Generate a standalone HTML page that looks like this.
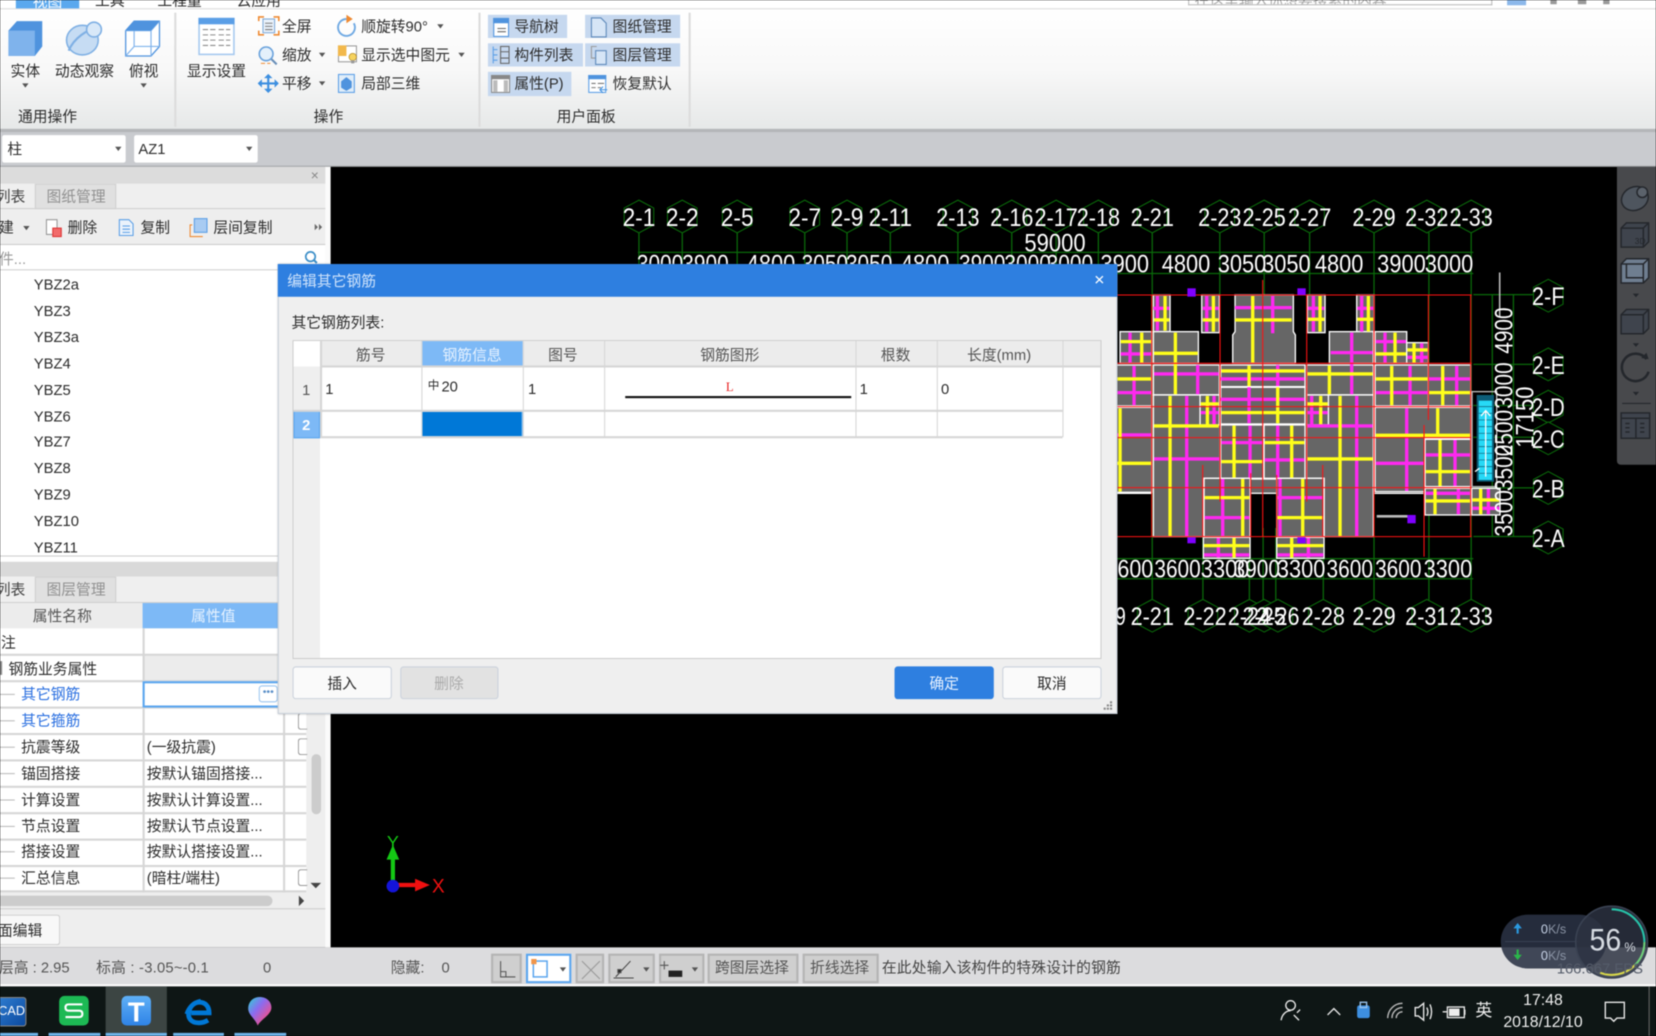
<!DOCTYPE html>
<html lang="zh"><head><meta charset="utf-8"><title>编辑其它钢筋</title>
<style>
html,body{margin:0;padding:0;width:1656px;height:1036px;overflow:hidden;background:#000}
#root{position:absolute;left:0;top:0;width:1568px;height:981px;overflow:hidden;transform-origin:0 0;transform:scale(1.05612);filter:blur(.45px);font-family:"Liberation Sans","Noto Sans CJK SC",sans-serif;font-size:14px;color:#2c2c2c}
.b{position:absolute;box-sizing:border-box}
.t{position:absolute;white-space:nowrap;line-height:1;transform:translateY(-50%)}
.c{position:absolute;white-space:nowrap;line-height:1;transform:translate(-50%,-50%)}
svg{position:absolute;overflow:visible}
.hl{position:absolute;background:#c6d8ef}
.ar{position:absolute;width:0;height:0;border-left:3px solid transparent;border-right:3px solid transparent;border-top:4px solid #555}
.ln{position:absolute;height:1.5px;background:#d6d6d6}
.g{color:#555}
.tb{position:absolute;box-sizing:border-box;top:903px;height:28px;background:#cfcfcf;border:2px solid #b4b4b4}
</style></head><body>
<div id="root">
<!-- ribbon -->
<div class="b" style="left:0;top:0;width:1568px;height:8px;background:#fff"></div>
<div class="b" style="left:15px;top:0;width:60px;height:8px;background:#5aa8ee;overflow:hidden"><span class="c" style="left:30px;top:1px;color:#fff">视图</span></div>
<div class="b" style="left:0;top:0;width:500px;height:8px;overflow:hidden"><span class="c" style="left:104px;top:0">工具</span><span class="c" style="left:170px;top:0">工程量</span><span class="c" style="left:245px;top:0">云应用</span></div>
<div class="b" style="left:1125px;top:0;width:288px;height:5px;background:#fff;border:1px solid #bbb;border-top:0;overflow:hidden"><span class="t" style="left:5px;top:0;color:#aaa">在这里输入你想要搜索的内容</span></div>
<div class="b" style="left:1427px;top:0;width:18px;height:5px;background:#8cb8ea"></div>
<div class="b" style="left:1468px;top:0;width:6px;height:4px;background:#999"></div><div class="b" style="left:1494px;top:0;width:8px;height:4px;background:#999"></div><div class="b" style="left:1518px;top:0;width:6px;height:4px;background:#999"></div>
<div class="b" style="left:0;top:8px;width:1568px;height:115px;background:linear-gradient(#fff 0,#f8f8f8 50%,#e6e8e8 100%);border-top:1px solid #e4e4e4"></div>
<div class="b" style="left:0;top:122px;width:1568px;height:3px;background:#b4b6b9"></div>
<div class="b" style="left:165px;top:12px;width:1.5px;height:108px;background:#dcdcdc"></div>
<div class="b" style="left:453px;top:12px;width:1.5px;height:108px;background:#dcdcdc"></div>
<div class="b" style="left:652px;top:12px;width:1.5px;height:108px;background:#dcdcdc"></div>
<span class="hl" style="left:462px;top:14px;width:75px;height:22px"></span>
<span class="hl" style="left:554px;top:14px;width:90px;height:22px"></span>
<span class="hl" style="left:462px;top:41px;width:90px;height:22px"></span>
<span class="hl" style="left:554px;top:41px;width:90px;height:22px"></span>
<span class="hl" style="left:462px;top:68px;width:79px;height:23px"></span>
<svg width="1568" height="130" style="left:0;top:0" fill="none">
<path d="M8 29 16 20H40V44L33 53H8Z" fill="#4f93de"/><rect x="8" y="29" width="25" height="24" fill="#7fb3ec"/>
<ellipse cx="78" cy="38" rx="15" ry="14" fill="#c6dcf3" stroke="#7fb0e4" stroke-width="1.5"/><path d="M65 48C70 36 82 28 95 25" stroke="#7fb0e4" stroke-width="2"/><circle cx="89" cy="28" r="7" fill="#d8e8f8" stroke="#7fb0e4" stroke-width="1.5"/>
<path d="M119 29 127 20H151V44L143 53H119Z" stroke="#4f93de" stroke-width="1.2" fill="#fff"/><path d="M119 29H143V53M143 29 151 20M127 20V44H151M119 53 127 44" stroke="#7fb3ec" stroke-width="1.1"/><path d="M119 29 127 20H151L143 29Z" fill="#4f93de"/>
<rect x="188.500" y="17.500" width="33" height="34" fill="#fff" stroke="#a6c9ef" stroke-width="1.500"/><rect x="188" y="17" width="34" height="6" fill="#5a9ee6"/>
<path d="M192 28h5M199 28h5M207 28h5M214 28h4M192 33h5M199 33h5M207 33h5M214 33h4M192 38h5M199 38h5M207 38h5M214 38h4M192 43h5M199 43h5M207 43h5M214 43h4" stroke="#8a8a8a"/>
<path d="M245 20v-4h5M259 16h5v4M264 29v4h-5M250 33h-5v-4" stroke="#ee8a33" stroke-width="1.500"/><rect x="249" y="18" width="11" height="13" fill="#eaf2fb" stroke="#7fa9d8"/><path d="M251 22h7M251 25h7M251 28h7" stroke="#7a7a7a"/>
<circle cx="252" cy="51" r="6.500" fill="#e4f0fb" stroke="#6aa2dc" stroke-width="1.500"/><path d="M257 56 262 61" stroke="#6a8fb8" stroke-width="2"/><path d="M247 60h4M253 60h3" stroke="#ee8a33"/>
<path d="M254 71V87M245 79H263" stroke="#3d8fe0" stroke-width="2"/><path d="M254 70 250 74H258ZM254 88 250 84H258ZM244 79 248 75V83ZM264 79 260 75V83Z" fill="#3d8fe0"/>
<path d="M328 18A8 8 0 1 0 335 22" stroke="#6fa9e3" stroke-width="1.800"/><path d="M328 14 334 18 328 22Z" fill="#ee8a33"/>
<rect x="320.500" y="43.500" width="17" height="15" fill="#fff" stroke="#9a9a9a"/><rect x="320" y="43" width="8" height="10" fill="#f2b84b"/><circle cx="334" cy="54" r="3.500" fill="#f6d35f" stroke="#b58b25" stroke-width=".7"/><rect x="332.500" y="57" width="3" height="3" fill="#999"/>
<rect x="320.500" y="70.500" width="15" height="17" fill="#e0edf9" stroke="#5a9ee6"/><path d="M328 73 333 77V83L328 86 323 83V77Z" fill="#4f93de"/>
<rect x="467.500" y="17.500" width="14" height="17" fill="#fff" stroke="#4f93de"/><rect x="467" y="17" width="15" height="5" fill="#4f93de"/><path d="M471 27h8M471 30h8" stroke="#666"/>
<path d="M560 17h9l5 5v13h-14Z" fill="#d6e5f6" stroke="#5b87b9"/>
<path d="M467 44v16M467 47h4M467 52h4M467 57h4" stroke="#5a9ee6"/><rect x="474" y="44" width="8" height="16" fill="none" stroke="#666"/><path d="M474 49h8M474 55h8" stroke="#666"/>
<path d="M565 44h-5v11h5" stroke="#999" fill="none"/><rect x="564" y="48" width="10" height="13" fill="#d6e5f6" stroke="#5b87b9"/>
<rect x="465.500" y="71.500" width="17" height="16" fill="#fff" stroke="#888"/><rect x="465" y="71" width="18" height="4" fill="#888"/><rect x="467" y="76" width="4" height="11" fill="#bbb"/><rect x="477" y="76" width="4" height="11" fill="#bbb"/>
<rect x="557.500" y="71.500" width="16" height="16" fill="#fff" stroke="#5a9ee6"/><rect x="557" y="71" width="17" height="4" fill="#4f93de"/><path d="M560 79h4M566 79h6M560 83h4M566 83h3" stroke="#777"/><path d="M569 85h6M571 82l-3 3 3 3" stroke="#3d8fe0"/>
</svg>
<span class="c" style="left:24px;top:67px">实体</span><span class="ar" style="left:21px;top:79px"></span>
<span class="c" style="left:80px;top:67px">动态观察</span>
<span class="c" style="left:136px;top:67px">俯视</span><span class="ar" style="left:133px;top:79px"></span>
<span class="c" style="left:205px;top:67px">显示设置</span>
<span class="c" style="left:45px;top:110px">通用操作</span><span class="c" style="left:311px;top:110px">操作</span><span class="c" style="left:555px;top:110px">用户面板</span>
<span class="t" style="left:267px;top:25px">全屏</span><span class="t" style="left:267px;top:52px">缩放</span><span class="ar" style="left:302px;top:50px"></span><span class="t" style="left:267px;top:79px">平移</span><span class="ar" style="left:302px;top:77px"></span>
<span class="t" style="left:342px;top:25px">顺旋转90°</span><span class="ar" style="left:414px;top:23px"></span><span class="t" style="left:342px;top:52px">显示选中图元</span><span class="ar" style="left:434px;top:50px"></span><span class="t" style="left:342px;top:79px">局部三维</span>
<span class="t" style="left:487px;top:25px">导航树</span><span class="t" style="left:580px;top:25px">图纸管理</span><span class="t" style="left:487px;top:52px">构件列表</span><span class="t" style="left:580px;top:52px">图层管理</span><span class="t" style="left:487px;top:79px">属性(P)</span><span class="t" style="left:580px;top:79px">恢复默认</span>
<!-- combos -->
<div class="b" style="left:0;top:125px;width:1568px;height:33px;background:#c9cbcf;border-bottom:1px solid #9fa1a4"></div>
<div class="b" style="left:2px;top:128px;width:117px;height:26px;background:#fff;border-radius:2px"></div><span class="t" style="left:7px;top:141px">柱</span><span class="ar" style="left:109px;top:139px"></span>
<div class="b" style="left:127px;top:128px;width:117px;height:26px;background:#fff;border-radius:2px"></div><span class="t" style="left:131px;top:141px">AZ1</span><span class="ar" style="left:233px;top:139px"></span>

<!-- CAD canvas -->
<svg width="1568" height="981" style="left:0;top:0" fill="none" font-family="Liberation Sans,sans-serif">
<rect x="313" y="158" width="1255" height="740" fill="#000"/>
<defs><polygon id="h" points="0,-15.500 14,-8 14,8 0,15.500 -14,8 -14,-8" stroke="#0a6a0a" stroke-width="1"/></defs>
<g stroke="#0a6a0a" stroke-width="1.200">
<path d="M605 220V265M646 220V265M698 220V265M762 220V265M802 220V265M843 220V265M907 220V265M958 220V265M1000 220V265M1040 220V265M1091 220V568M1155 220V305M1197 220V305M1240 220V305M1301 220V568M1353 220V568M1393 220V568"/>
<path d="M604 239H1395M604 259H1395"/>
<path d="M1058 529H1395M1058 548H1395M1139 500V568M1183 500V568M1196 500V568M1208 500V568M1253 500V568"/>
<path d="M1395 279H1452M1395 345H1452M1395 384H1452M1395 414H1452M1395 462H1452M1395 508H1452M1413 279V508M1433 279V508"/>
</g>
<path d="M1420 258V300" stroke="#bbb" stroke-width="1.500"/>
<g fill="#000">
<use href="#h" x="605" y="205"/><use href="#h" x="646" y="205"/><use href="#h" x="698" y="205"/><use href="#h" x="762" y="205"/><use href="#h" x="802" y="205"/><use href="#h" x="843" y="205"/><use href="#h" x="907" y="205"/><use href="#h" x="958" y="205"/><use href="#h" x="1000" y="205"/><use href="#h" x="1040" y="205"/><use href="#h" x="1091" y="205"/><use href="#h" x="1155" y="205"/><use href="#h" x="1197" y="205"/><use href="#h" x="1240" y="205"/><use href="#h" x="1301" y="205"/><use href="#h" x="1351" y="205"/><use href="#h" x="1393" y="205"/>
<use href="#h" x="1091" y="583"/><use href="#h" x="1139" y="583"/><use href="#h" x="1183" y="583"/><use href="#h" x="1197" y="583"/><use href="#h" x="1210" y="583"/><use href="#h" x="1253" y="583"/><use href="#h" x="1301" y="583"/><use href="#h" x="1351" y="583"/><use href="#h" x="1393" y="583"/>
<use href="#h" x="1466" y="280"/><use href="#h" x="1466" y="345"/><use href="#h" x="1466" y="385"/><use href="#h" x="1466" y="415"/><use href="#h" x="1466" y="462"/><use href="#h" x="1466" y="509"/>
</g>
<g fill="#fff" font-size="24" text-anchor="middle">
<text x="605" y="214" textLength="31" lengthAdjust="spacingAndGlyphs">2-1</text><text x="646" y="214" textLength="31" lengthAdjust="spacingAndGlyphs">2-2</text><text x="698" y="214" textLength="31" lengthAdjust="spacingAndGlyphs">2-5</text><text x="762" y="214" textLength="31" lengthAdjust="spacingAndGlyphs">2-7</text><text x="802" y="214" textLength="31" lengthAdjust="spacingAndGlyphs">2-9</text><text x="843" y="214" textLength="41" lengthAdjust="spacingAndGlyphs">2-11</text><text x="907" y="214" textLength="41" lengthAdjust="spacingAndGlyphs">2-13</text><text x="958" y="214" textLength="41" lengthAdjust="spacingAndGlyphs">2-16</text><text x="1000" y="214" textLength="41" lengthAdjust="spacingAndGlyphs">2-17</text><text x="1040" y="214" textLength="41" lengthAdjust="spacingAndGlyphs">2-18</text><text x="1091" y="214" textLength="41" lengthAdjust="spacingAndGlyphs">2-21</text><text x="1155" y="214" textLength="41" lengthAdjust="spacingAndGlyphs">2-23</text><text x="1197" y="214" textLength="41" lengthAdjust="spacingAndGlyphs">2-25</text><text x="1240" y="214" textLength="41" lengthAdjust="spacingAndGlyphs">2-27</text><text x="1301" y="214" textLength="41" lengthAdjust="spacingAndGlyphs">2-29</text><text x="1351" y="214" textLength="41" lengthAdjust="spacingAndGlyphs">2-32</text><text x="1393" y="214" textLength="41" lengthAdjust="spacingAndGlyphs">2-33</text>
<text x="999" y="238" textLength="58" lengthAdjust="spacingAndGlyphs">59000</text>
<text x="625" y="258" textLength="44" lengthAdjust="spacingAndGlyphs">3000</text><text x="668" y="258" textLength="44" lengthAdjust="spacingAndGlyphs">3900</text><text x="730" y="258" textLength="46" lengthAdjust="spacingAndGlyphs">4800</text><text x="781" y="258" textLength="44" lengthAdjust="spacingAndGlyphs">3050</text><text x="823" y="258" textLength="44" lengthAdjust="spacingAndGlyphs">3050</text><text x="876" y="258" textLength="46" lengthAdjust="spacingAndGlyphs">4800</text><text x="930" y="258" textLength="44" lengthAdjust="spacingAndGlyphs">3900</text><text x="973" y="258" textLength="44" lengthAdjust="spacingAndGlyphs">3000</text><text x="1013" y="258" textLength="44" lengthAdjust="spacingAndGlyphs">3000</text><text x="1065" y="258" textLength="46" lengthAdjust="spacingAndGlyphs">3900</text><text x="1123" y="258" textLength="46" lengthAdjust="spacingAndGlyphs">4800</text><text x="1176" y="258" textLength="46" lengthAdjust="spacingAndGlyphs">3050</text><text x="1218" y="258" textLength="46" lengthAdjust="spacingAndGlyphs">3050</text><text x="1268" y="258" textLength="46" lengthAdjust="spacingAndGlyphs">4800</text><text x="1327" y="258" textLength="46" lengthAdjust="spacingAndGlyphs">3900</text><text x="1372" y="258" textLength="46" lengthAdjust="spacingAndGlyphs">3000</text>
</g>
<!-- building -->
<g transform="translate(1041.6 265.1) scale(.3156)">
<g fill="#666" stroke="#fff" stroke-width="4">
<rect x="50" y="382" width="105" height="255"/><rect x="50" y="255" width="105" height="123"/><rect x="60" y="155" width="95" height="95"/>
<rect x="160" y="45" width="50" height="110"/><rect x="305" y="45" width="53" height="113"/><path d="M405 45H580V155L586 165V250H398V165L405 155Z"/><rect x="622" y="45" width="53" height="113"/><rect x="770" y="45" width="52" height="113"/>
<rect x="160" y="155" width="135" height="95"/><rect x="688" y="155" width="132" height="95"/><rect x="825" y="155" width="95" height="95"/><rect x="920" y="188" width="65" height="62"/>
<rect x="160" y="255" width="198" height="90"/><rect x="620" y="255" width="200" height="90"/><rect x="825" y="255" width="160" height="123"/><rect x="985" y="255" width="127" height="123"/>
<path d="M160 345H360V595H310V770H160Z"/><path d="M685 345H820V770H672V595H620V435H685Z"/>
<rect x="362" y="255" width="253" height="65"/><rect x="362" y="322" width="253" height="110"/>
<path d="M825 382H1112V475H975V635H825Z"/>
<rect x="362" y="435" width="128" height="160"/><rect x="492" y="435" width="123" height="160"/>
<rect x="450" y="597" width="80" height="43"/>
<rect x="312" y="595" width="138" height="175"/><rect x="530" y="595" width="142" height="175"/>
<rect x="300" y="345" width="58" height="90"/><rect x="620" y="345" width="65" height="90"/>
<rect x="975" y="478" width="137" height="142"/><rect x="975" y="625" width="137" height="80"/><rect x="1115" y="625" width="85" height="80"/>
<rect x="310" y="772" width="140" height="63"/><rect x="530" y="772" width="142" height="63"/>
</g>
<path d="M50 640H155M822 640H970" stroke="#fff" stroke-width="4"/>
<path d="M830 709H930" stroke="#bbb" stroke-width="8"/>
<g stroke="#ff28f0" stroke-width="10">
<path d="M172 48V152M160 85H208M320 48V155M308 85H356M518 48V160M405 83H575M640 48V155M624 85H673M785 48V155M772 85H820"/>
<path d="M90 158V248M62 222H153M755 158V343M692 218H818M855 158V248M827 185H918M965 190V248M922 232H983"/>
<path d="M102 258V376M52 338H153M162 282H356M293 255V343M362 297H613M533 255V318M930 258V376M827 338H983M1070 258V376M987 297H1110"/>
<path d="M260 348V768M162 537H358M342 348V433M302 398H356M362 358H613M447 322V430M635 348V433M622 398H683M770 348V768M622 438H818M52 465H153"/>
<path d="M920 385V633M827 550H973M1065 480V618M977 525H1110M1075 627V703M977 640H1110M1165 627V703M1117 685H1198"/>
<path d="M450 437V593M364 488H488M533 437V593M494 540H613M368 597V768M314 713H448M540 597V768M532 653H670M355 774V833M312 825H448M625 774V833M532 825H670"/>
</g>
<g stroke="#ffff1a" stroke-width="10">
<path d="M195 48V152M162 120H208M340 48V155M308 120H356M458 48V248M405 120H575M660 48V155M624 118H673M805 48V155M772 118H820"/>
<path d="M125 158V248M62 185H153M226 158V343M162 220H293M885 158V248M827 222H918M942 190V248M922 210H983"/>
<path d="M52 297H153M688 257V343M622 282H818M447 257V318M364 273H613M875 258V376M827 297H983M1028 258V376M987 338H1110"/>
<path d="M210 348V768M162 438H356M322 348V433M302 372H356M533 322V430M364 398H613M662 348V433M622 372H683M720 348V768M622 537H818M60 385V635M52 550H153"/>
<path d="M1013 385V470M827 466H1110M1020 480V618M977 575H1110M1005 627V703M977 663H1110M1142 627V703M1117 660H1198"/>
<path d="M402 437V593M364 545H488M575 437V593M494 488H613M428 597V768M314 653H448M608 597V768M532 713H670M402 774V833M312 797H448M575 774V833M532 797H670"/>
</g>
<path d="M155 45V770M360 45V665M488 0V770M620 45V665M822 45V770M1112 45V770M985 45V420M972 435V830M308 555V770M452 580V770M530 585V770M668 555V770M50 45H1115M50 250H1115M50 380H1115M50 473H1115M50 623H1115M50 770H1115" stroke="#f11" stroke-width="3.200"/>
<g fill="#8000ff"><rect x="262" y="25" width="25" height="25"/><rect x="592" y="25" width="25" height="20"/><rect x="922" y="705" width="25" height="25"/><rect x="262" y="772" width="25" height="18"/><rect x="592" y="772" width="25" height="18"/></g>
<rect x="1116" y="335" width="74" height="285" fill="none" stroke="#bbb" stroke-width="4"/>
<rect x="1130" y="345" width="52" height="260" fill="#0c5d78"/>
<rect x="1136" y="362" width="40" height="238" fill="#27d9f6"/>
<path d="M1136 380H1176M1136 400H1176M1136 420H1176M1136 440H1176M1136 460H1176M1136 480H1176M1136 500H1176M1136 520H1176M1136 540H1176M1136 560H1176M1136 580H1176" stroke="#0c5d78" stroke-width="2"/>
<path d="M1157 590V392M1143 408 1157 392 1171 408M1125 575 1138 565" stroke="#fff" stroke-width="4"/>
</g>
<g fill="#fff" font-size="24" text-anchor="middle">
<text x="1075" y="547" textLength="34" lengthAdjust="spacingAndGlyphs">600</text><text x="1115" y="547" textLength="44" lengthAdjust="spacingAndGlyphs">3600</text><text x="1160" y="547" textLength="46" lengthAdjust="spacingAndGlyphs">3300</text><text x="1190" y="547" textLength="44" lengthAdjust="spacingAndGlyphs">3900</text><text x="1232" y="547" textLength="46" lengthAdjust="spacingAndGlyphs">3300</text><text x="1278" y="547" textLength="44" lengthAdjust="spacingAndGlyphs">3600</text><text x="1324" y="547" textLength="44" lengthAdjust="spacingAndGlyphs">3600</text><text x="1371" y="547" textLength="46" lengthAdjust="spacingAndGlyphs">3300</text>
<text x="1061" y="592" textLength="10" lengthAdjust="spacingAndGlyphs">9</text><text x="1091" y="592" textLength="41" lengthAdjust="spacingAndGlyphs">2-21</text><text x="1141" y="592" textLength="41" lengthAdjust="spacingAndGlyphs">2-22</text><text x="1183" y="592" textLength="41" lengthAdjust="spacingAndGlyphs">2-24</text><text x="1197" y="592" textLength="41" lengthAdjust="spacingAndGlyphs">2-25</text><text x="1210" y="592" textLength="41" lengthAdjust="spacingAndGlyphs">2-26</text><text x="1253" y="592" textLength="41" lengthAdjust="spacingAndGlyphs">2-28</text><text x="1301" y="592" textLength="41" lengthAdjust="spacingAndGlyphs">2-29</text><text x="1351" y="592" textLength="41" lengthAdjust="spacingAndGlyphs">2-31</text><text x="1393" y="592" textLength="41" lengthAdjust="spacingAndGlyphs">2-33</text>
<text x="1466" y="289" textLength="31" lengthAdjust="spacingAndGlyphs">2-F</text><text x="1466" y="354" textLength="31" lengthAdjust="spacingAndGlyphs">2-E</text><text x="1466" y="394" textLength="31" lengthAdjust="spacingAndGlyphs">2-D</text><text x="1466" y="424" textLength="31" lengthAdjust="spacingAndGlyphs">2-C</text><text x="1466" y="471" textLength="31" lengthAdjust="spacingAndGlyphs">2-B</text><text x="1466" y="518" textLength="31" lengthAdjust="spacingAndGlyphs">2-A</text>
<text transform="translate(1432 313) rotate(-90)" textLength="44" lengthAdjust="spacingAndGlyphs">4900</text><text transform="translate(1432 365) rotate(-90)" textLength="44" lengthAdjust="spacingAndGlyphs">3000</text><text transform="translate(1432 410) rotate(-90)" textLength="44" lengthAdjust="spacingAndGlyphs">2500</text><text transform="translate(1432 443) rotate(-90)" textLength="44" lengthAdjust="spacingAndGlyphs">3500</text><text transform="translate(1432 486) rotate(-90)" textLength="44" lengthAdjust="spacingAndGlyphs">3500</text>
<text transform="translate(1452 395) rotate(-90)" textLength="58" lengthAdjust="spacingAndGlyphs">17150</text>
</g>
<!-- axes -->
<path d="M372 838V808" stroke="#14c814" stroke-width="4"/><path d="M372 800 366 814H378Z" fill="#14c814"/>
<path d="M372 838H398" stroke="#f01010" stroke-width="4"/><path d="M407 838 393 832V844Z" fill="#f01010"/><circle cx="372" cy="839" r="6" fill="#1414d8"/>
<text x="372" y="803" fill="#14c814" font-size="17" text-anchor="middle">Y</text><text x="415" y="845" fill="#f01010" font-size="18" text-anchor="middle">X</text>
<!-- right toolbar -->
<path d="M1531 158H1568V440H1535Q1531 440 1531 436Z" fill="#48494c"/>
<g stroke="#24272c" stroke-width="1.400">
<ellipse cx="1548" cy="188" rx="13" ry="11" fill="#4e555e" transform="rotate(-25 1548 188)"/><circle cx="1555" cy="182" r="5" fill="#5b626b"/>
<path d="M1535 216 1540 211H1561V229L1556 234H1535Z" fill="#3f444d"/><path d="M1535 216H1556V234M1556 216 1561 211" />
<path d="M1535 250 1540 245H1561V263L1556 268H1535Z" fill="#6f7e90"/><path d="M1535 250H1556V268M1556 250 1561 245M1540 250V263H1556" />
<path d="M1535 298 1540 293H1561V311L1556 316H1535Z" fill="#3f444d"/><path d="M1535 298H1556V316M1556 298 1561 293"/>
<path d="M1559 340A13 13 0 1 0 1561 352" stroke-width="2.400"/>
<rect x="1535" y="391" width="27" height="24" fill="#3f444d"/>
<path d="M1535 396H1562M1549 396V415M1539 401h4M1539 405h4M1539 409h4M1553 401h4M1553 405h4M1553 409h4"/>
</g>
<path d="M1561 340l-7-1 5-5Z" fill="#24272c"/>
<text x="1553" y="231" fill="#24272c" font-size="8" text-anchor="middle">3D</text>
<path d="M1546 278h6l-3 3.500ZM1546 325h6l-3 3.500ZM1546 371h6l-3 3.500Z" fill="#24272c"/>
<path d="M1536 382H1563" stroke="#24272c"/>
</svg>

<!-- left panel -->
<div class="b" style="left:0;top:158px;width:313px;height:739px;background:#eee"></div>
<div class="b" style="left:308px;top:158px;width:5px;height:739px;background:#fbfbfb"></div>
<div class="b" style="left:0;top:158px;width:308px;height:16px;background:#dcdcdc"></div>
<span class="c" style="left:298px;top:166px;color:#888;font-size:13px">×</span>
<div class="b" style="left:0;top:174px;width:308px;height:24px;background:#efefef;border-bottom:1px solid #cfcfcf"></div>
<div class="b" style="left:33px;top:174px;width:77px;height:24px;background:#e0e0e0;border:1px solid #d0d0d0"></div>
<span class="t" style="left:-4px;top:186px;color:#444">列表</span><span class="c" style="left:72px;top:186px;color:#909090">图纸管理</span>
<span class="t" style="left:-1px;top:215px">建</span><span class="ar" style="left:22px;top:214px"></span>
<svg width="320" height="40" style="left:0;top:200px" fill="none"><path d="M44 8h10v14h-10z" fill="#fff" stroke="#999"/><rect x="50" y="16" width="8" height="8" fill="#f26b6b" stroke="#d33"/>
<path d="M113 8h9l4 4v11h-13z" fill="#eaf2fb" stroke="#5a9ee6"/><path d="M116 14h7M116 17h7M116 20h7" stroke="#5a9ee6"/>
<rect x="184" y="7" width="12" height="13" fill="#a8cbf2" stroke="#5a9ee6"/><path d="M182 13h-2v11h12" stroke="#ee8a33"/><path d="M298 12l3 3-3 3zM302 12l3 3-3 3z" fill="#666"/></svg>
<span class="t" style="left:64px;top:215px">删除</span><span class="t" style="left:133px;top:215px">复制</span><span class="t" style="left:202px;top:215px">层间复制</span>
<div class="b" style="left:0;top:231px;width:308px;height:25px;background:#fff;border-top:1px solid #ccc;border-bottom:1px solid #ccc"></div>
<span class="t" style="left:-1px;top:245px;color:#999">件...</span>
<svg width="14" height="14" style="left:288px;top:237px" fill="none"><circle cx="6" cy="6" r="4.500" stroke="#3d8fc8" stroke-width="1.600"/><path d="M9 9l3 3" stroke="#3d8fc8" stroke-width="2"/></svg>
<div class="b" style="left:0;top:256px;width:308px;height:271px;background:#fff;border-bottom:1px solid #ccc"></div>
<span class="t" style="left:32px;top:269px">YBZ2a</span><span class="t" style="left:32px;top:294px">YBZ3</span><span class="t" style="left:32px;top:319px">YBZ3a</span><span class="t" style="left:32px;top:344px">YBZ4</span><span class="t" style="left:32px;top:369px">YBZ5</span><span class="t" style="left:32px;top:394px">YBZ6</span><span class="t" style="left:32px;top:418px">YBZ7</span><span class="t" style="left:32px;top:443px">YBZ8</span><span class="t" style="left:32px;top:468px">YBZ9</span><span class="t" style="left:32px;top:493px">YBZ10</span><span class="t" style="left:32px;top:518px">YBZ11</span>
<div class="b" style="left:0;top:527px;width:308px;height:5px;background:#fff"></div>
<div class="b" style="left:0;top:532px;width:308px;height:14px;background:#d9d9d9"></div>
<div class="b" style="left:0;top:546px;width:308px;height:25px;background:#efefef;border-bottom:1px solid #cfcfcf"></div>
<div class="b" style="left:33px;top:546px;width:77px;height:25px;background:#e0e0e0;border:1px solid #d0d0d0"></div>
<span class="t" style="left:-4px;top:558px;color:#444">列表</span><span class="c" style="left:72px;top:558px;color:#909090">图层管理</span>
<div class="b" style="left:0;top:571px;width:135px;height:24px;background:#ececec"></div>
<div class="b" style="left:135px;top:571px;width:155px;height:24px;background:#7db9f6"></div>
<span class="c" style="left:59px;top:583px;color:#555">属性名称</span><span class="c" style="left:202px;top:583px;color:#e6f2ff">属性值</span>
<div class="b" style="left:0;top:595px;width:290px;height:250px;background:#fff"></div>
<div class="b" style="left:135px;top:621px;width:155px;height:24px;background:#ececec"></div>
<span class="ln" style="left:0;top:619px;width:290px"></span><span class="ln" style="left:0;top:644px;width:290px"></span><span class="ln" style="left:0;top:669px;width:290px"></span><span class="ln" style="left:0;top:694px;width:290px"></span><span class="ln" style="left:0;top:719px;width:290px"></span><span class="ln" style="left:0;top:744px;width:290px"></span><span class="ln" style="left:0;top:769px;width:290px"></span><span class="ln" style="left:0;top:794px;width:290px"></span><span class="ln" style="left:0;top:819px;width:290px"></span><span class="ln" style="left:0;top:843px;width:290px"></span>
<span class="b" style="left:135px;top:595px;width:1.5px;height:250px;background:#d6d6d6"></span><span class="b" style="left:268px;top:670px;width:1.5px;height:175px;background:#d6d6d6"></span>
<span class="b" style="left:0;top:626px;width:1.5px;height:13px;background:#888"></span>
<span class="b" style="left:0;top:657px;width:14px;height:1px;background:#bbb"></span><span class="b" style="left:0;top:682px;width:14px;height:1px;background:#bbb"></span><span class="b" style="left:0;top:707px;width:14px;height:1px;background:#bbb"></span><span class="b" style="left:0;top:732px;width:14px;height:1px;background:#bbb"></span><span class="b" style="left:0;top:757px;width:14px;height:1px;background:#bbb"></span><span class="b" style="left:0;top:782px;width:14px;height:1px;background:#bbb"></span><span class="b" style="left:0;top:806px;width:14px;height:1px;background:#bbb"></span><span class="b" style="left:0;top:831px;width:14px;height:1px;background:#bbb"></span>
<span class="t" style="left:1px;top:608px">注</span><span class="t" style="left:8px;top:633px">钢筋业务属性</span>
<span class="t" style="left:20px;top:657px;color:#2a6fe0">其它钢筋</span><span class="t" style="left:20px;top:682px;color:#2a6fe0">其它箍筋</span>
<span class="t" style="left:20px;top:707px">抗震等级</span><span class="t" style="left:20px;top:732px">锚固搭接</span><span class="t" style="left:20px;top:757px">计算设置</span><span class="t" style="left:20px;top:782px">节点设置</span><span class="t" style="left:20px;top:806px">搭接设置</span><span class="t" style="left:20px;top:831px">汇总信息</span>
<span class="t" style="left:139px;top:707px">(一级抗震)</span><span class="t" style="left:139px;top:732px">按默认锚固搭接...</span><span class="t" style="left:139px;top:757px">按默认计算设置...</span><span class="t" style="left:139px;top:782px">按默认节点设置...</span><span class="t" style="left:139px;top:806px">按默认搭接设置...</span><span class="t" style="left:139px;top:831px">(暗柱/端柱)</span>
<div class="b" style="left:135px;top:645px;width:150px;height:25px;background:#fff;border:2px solid #5aa5ee"></div>
<div class="b" style="left:245px;top:649px;width:18px;height:16px;background:#fff;border:1.5px solid #9cc6f0;border-radius:3px;color:#5a8fc8;font-size:10px;line-height:11px;text-align:center">•••</div>
<div class="b" style="left:282px;top:675px;width:9px;height:16px;border:1.5px solid #999;border-right:0;border-radius:3px 0 0 3px"></div><div class="b" style="left:282px;top:699px;width:9px;height:16px;border:1.5px solid #999;border-right:0;border-radius:3px 0 0 3px"></div><div class="b" style="left:282px;top:823px;width:9px;height:16px;border:1.5px solid #999;border-right:0;border-radius:3px 0 0 3px"></div>
<div class="b" style="left:295px;top:714px;width:9px;height:57px;background:#ccc;border-radius:5px"></div>
<div class="b" style="left:294px;top:836px;width:0;height:0;border-left:5px solid transparent;border-right:5px solid transparent;border-top:5px solid #444"></div>
<div class="b" style="left:0;top:848px;width:258px;height:10px;background:#ccc;border-radius:0 5px 5px 0"></div>
<div class="b" style="left:283px;top:848px;width:0;height:0;border-top:5px solid transparent;border-bottom:5px solid transparent;border-left:5px solid #444"></div>
<div class="b" style="left:0;top:860px;width:308px;height:1px;background:#ccc"></div>
<div class="b" style="left:0;top:866px;width:57px;height:29px;background:#f8f8f8;border:1px solid #ccc;border-left:0;border-radius:0 3px 3px 0"></div>
<span class="t" style="left:-2px;top:881px">面编辑</span>

<!-- status bar -->
<div class="b" style="left:0;top:897px;width:1568px;height:37px;background:#dcdcde;border-bottom:2px solid #fff"></div>
<span class="t g" style="left:-1px;top:916px">层高 : 2.95</span><span class="t g" style="left:91px;top:916px;letter-spacing:.2px">标高 : -3.05~-0.1</span><span class="t g" style="left:249px;top:916px">0</span><span class="t g" style="left:370px;top:916px">隐藏:</span><span class="t g" style="left:418px;top:916px">0</span>
<div class="tb" style="left:465px;width:29px"></div><div class="tb" style="left:498px;width:43px;background:#fff;border-color:#5aa5ee"></div><div class="tb" style="left:545px;width:27px"></div><div class="tb" style="left:576px;width:44px"></div><div class="tb" style="left:624px;width:43px"></div><div class="tb" style="left:670px;width:86px"></div><div class="tb" style="left:760px;width:72px"></div>
<svg width="300" height="30" style="left:465px;top:903px" fill="none" stroke="#555">
<path d="M9 7V22H23M9 17H14V22"/><rect x="40" y="7" width="13" height="15" stroke="#5aa5ee" stroke-width="1.400"/><rect x="38" y="5" width="5" height="5" fill="#f0954a" stroke="none"/><path d="M65 13h6l-3 4z" fill="#555" stroke="none"/>
<path d="M86 7 103 24M103 7 86 24" stroke="#999"/>
<path d="M116 23H135M118 22 132 7" stroke="#444"/><rect x="120" y="15" width="3" height="3" fill="#222"/><path d="M144 13h6l-3 4z" fill="#555" stroke="none"/>
<path d="M164 7V15M160 11H168"/><rect x="168" y="16" width="13" height="6" fill="#222" stroke="none"/><path d="M190 13h6l-3 4z" fill="#555" stroke="none"/></svg>
<span class="c g" style="left:712px;top:916px">跨图层选择</span><span class="c g" style="left:795px;top:916px">折线选择</span><span class="t" style="left:835px;top:916px;color:#444;letter-spacing:.15px">在此处输入该构件的特殊设计的钢筋</span>

<!-- dialog -->
<div class="b" style="left:263px;top:250px;width:795px;height:426px;background:#efefef;border:1px solid #c8d0da;border-top:0;box-shadow:0 0 2px rgba(0,0,0,.3)"></div>
<div class="b" style="left:263px;top:250px;width:795px;height:31px;background:#2e7fe0"></div>
<span class="t" style="left:272px;top:266px;color:#cfe3fb">编辑其它钢筋</span><span class="c" style="left:1041px;top:265px;color:#fff;font-size:17px">×</span>
<span class="t" style="left:276px;top:305px">其它钢筋列表:</span>
<div class="b" style="left:277px;top:322px;width:766px;height:302px;background:#fff;border:1.5px solid #ccc"></div>
<div class="b" style="left:278px;top:347px;width:25px;height:276px;background:#efefef"></div>
<div class="b" style="left:303px;top:323px;width:739px;height:24px;background:#ececec"></div>
<div class="b" style="left:278px;top:323px;width:25px;height:24px;background:#fff"></div>
<div class="b" style="left:398.500px;top:323px;width:96px;height:24px;background:#7db9f6"></div>
<div class="b" style="left:278px;top:389px;width:25px;height:26px;background:#7db9f6;border:1px solid #5aa5ee"></div>
<div class="b" style="left:399.500px;top:390px;width:94px;height:23px;background:#0078d7;outline:1.5px solid #66aeea"></div>
<span class="ln" style="left:303px;top:346px;width:739px"></span><span class="ln" style="left:278px;top:388px;width:728px;height:2px"></span><span class="ln" style="left:303px;top:413px;width:703px;height:2px"></span>
<span class="b" style="left:303px;top:323px;width:1.5px;height:91px;background:#d6d6d6"></span><span class="b" style="left:398.500px;top:323px;width:1.5px;height:91px;background:#d6d6d6"></span><span class="b" style="left:494.500px;top:323px;width:1.5px;height:91px;background:#d6d6d6"></span><span class="b" style="left:571.500px;top:323px;width:1.5px;height:91px;background:#d6d6d6"></span><span class="b" style="left:809.500px;top:323px;width:1.5px;height:91px;background:#d6d6d6"></span><span class="b" style="left:886.500px;top:323px;width:1.5px;height:91px;background:#d6d6d6"></span><span class="b" style="left:1005.500px;top:323px;width:1.5px;height:91px;background:#d6d6d6"></span>
<span class="c g" style="left:351px;top:336px">筋号</span><span class="c" style="left:447px;top:336px;color:#e6f2ff">钢筋信息</span><span class="c g" style="left:533px;top:336px">图号</span><span class="c g" style="left:691px;top:336px">钢筋图形</span><span class="c g" style="left:848px;top:336px">根数</span><span class="c g" style="left:946px;top:336px">长度(mm)</span>
<span class="c g" style="left:290px;top:369px">1</span><span class="c" style="left:290px;top:402px;color:#fff;font-weight:bold">2</span>
<span class="t" style="left:308px;top:368px">1</span><span class="t" style="left:405px;top:366px"><span style="font-size:11px;position:relative;top:-2px;margin-right:2px">中</span>20</span><span class="t" style="left:500px;top:368px">1</span><span class="t" style="left:814px;top:368px">1</span><span class="t" style="left:891px;top:368px">0</span>
<span class="c" style="left:691px;top:366px;color:#e82020;font-family:'Liberation Serif',serif;font-size:12px">L</span>
<div class="b" style="left:592px;top:375px;width:214px;height:2px;background:#111"></div>
<div class="b" style="left:277px;top:631px;width:94px;height:31px;background:#fafafa;border:1px solid #cbd2dc;border-radius:3px"></div><span class="c" style="left:324px;top:647px">插入</span>
<div class="b" style="left:379px;top:631px;width:93px;height:31px;background:#e2e2e2;border:1px solid #cbd2dc;border-radius:3px"></div><span class="c" style="left:425px;top:647px;color:#aaa">删除</span>
<div class="b" style="left:847px;top:631px;width:94px;height:31px;background:#2e7fe0;border-radius:3px"></div><span class="c" style="left:894px;top:647px;color:#e8f2ff">确定</span>
<div class="b" style="left:949px;top:631px;width:94px;height:31px;background:#fafafa;border:1px solid #cbd2dc;border-radius:3px"></div><span class="c" style="left:996px;top:647px">取消</span>
<svg width="10" height="10" style="left:1044px;top:663px"><path d="M7 1h2v2H7zM4 4h2v2H4zM7 4h2v2H7zM1 7h2v2H1zM4 7h2v2H4zM7 7h2v2H7z" fill="#888"/></svg>

<!-- taskbar -->
<div class="b" style="left:0;top:934px;width:1568px;height:47px;background:#0e1615"></div>
<div class="b" style="left:100px;top:934px;width:58px;height:44px;background:#3c4543"></div>
<div class="b" style="left:0;top:978px;width:36px;height:3px;background:#6db3e8"></div><div class="b" style="left:46px;top:978px;width:49px;height:3px;background:#6db3e8"></div><div class="b" style="left:100px;top:978px;width:58px;height:3px;background:#6db3e8"></div><div class="b" style="left:164px;top:978px;width:48px;height:3px;background:#6db3e8"></div><div class="b" style="left:222px;top:978px;width:49px;height:3px;background:#6db3e8"></div>
<div class="b" style="left:-3px;top:944px;width:28px;height:28px;background:linear-gradient(135deg,#2f7ccf,#0b4aa0);border:1.5px solid #888;border-radius:3px;color:#fff;font-size:12px;line-height:25px;text-align:center;overflow:hidden">CAD</div>
<div class="b" style="left:56px;top:943px;width:28px;height:28px;background:#1db954;border-radius:5px"></div>
<svg width="28" height="28" style="left:56px;top:943px" fill="none"><path d="M22 8H9Q6 8 6 11T9 14H19Q22 14 22 17T19 20H6" stroke="#fff" stroke-width="2"/></svg>
<div class="b" style="left:115px;top:943px;width:28px;height:28px;background:linear-gradient(#5fb0f7,#2f83e6);border-radius:5px"></div>
<span class="c" style="left:129px;top:958px;color:#fff;font-weight:bold;font-size:26px">T</span>
<svg width="26" height="26" style="left:175px;top:945px" fill="none"><path d="M6 14H23C23 7.500 19 4 14 4 8 4 4 9 3.500 15 3.500 21 8 23.500 13.500 23.500 16.500 23.500 19.500 22.500 22 21" stroke="#0078d7" stroke-width="4.500"/><path d="M1 15C3 8 9 3 15 2" stroke="#0078d7" stroke-width="2.500"/></svg>
<svg width="24" height="30" style="left:234px;top:943px"><defs><linearGradient id="pg" x1="0" y1="0" x2="1" y2="1"><stop offset="0" stop-color="#2cd5d5"/><stop offset=".4" stop-color="#8a6cf0"/><stop offset=".8" stop-color="#f0508c"/><stop offset="1" stop-color="#f7a02c"/></linearGradient></defs><path d="M12 1C5 1 1 6 1 12 1 18 8 22 10 28 13 22 23 18 23 11 23 5 18 1 12 1Z" fill="url(#pg)"/></svg>
<svg width="340" height="40" style="left:1200px;top:940px" fill="none" stroke="#e8e8e8" stroke-width="1.300">
<circle cx="22" cy="12" r="4.500"/><path d="M13 26C14 20 18 17 22 17M25 21 30 26M28 19 31 16"/><path d="M57 21 63 15 69 21"/>
<rect x="85" y="12" width="12" height="12" rx="2" fill="#3d8fe0" stroke="none"/><rect x="88" y="9" width="6" height="5" stroke="#9ac4ee"/>
<path d="M114 24A14 14 0 0 1 128 10M118 24A10 10 0 0 1 128 14M122 24A6 6 0 0 1 128 18" stroke="#bbb"/>
<path d="M140 14h3l5-4v16l-5-4h-3zM151 14q2 4 0 8M154 11q3 7 0 14"/>
<rect x="170.500" y="13.500" width="16" height="10"/><rect x="172" y="15" width="10" height="7" fill="#eee" stroke="none"/><path d="M166 18h4M187 16v5"/>
<path d="M322 9H340V24H333L330 27 327 24H322Z" transform="translate(-2 0)"/></svg>
<span class="c" style="left:1405px;top:958px;color:#eee;font-size:16px">英</span>
<span class="c" style="left:1461px;top:947px;color:#eee;font-size:15px">17:48</span><span class="c" style="left:1461px;top:968px;color:#eee;font-size:15px">2018/12/10</span>
<div class="b" style="left:1561px;top:934px;width:1px;height:47px;background:#666"></div>

<!-- net widget -->
<div class="b" style="left:1421px;top:866px;width:100px;height:51px;background:rgba(42,50,68,.88);border-radius:26px"></div>
<div class="b" style="left:1425px;top:891px;width:70px;height:1px;background:#394152"></div>
<svg width="1568" height="981" style="left:0;top:0" fill="none">
<path d="M1437 874 1433 879H1436V884H1438V879H1441Z" fill="#2b9ae0"/><path d="M1437 909 1433 904H1436V899H1438V904H1441Z" fill="#2bb84a"/>
<circle cx="1526" cy="892" r="34" fill="rgba(44,50,66,.84)" stroke="#3a4252" stroke-width="1.500"/>
<path d="M1526 861A31 31 0 0 1 1557 892" stroke="#27c2a8" stroke-width="2"/><path d="M1557 892A31 31 0 0 1 1548 914" stroke="#6fd07a" stroke-width="2"/><path d="M1548 914A31 31 0 0 1 1515 921" stroke="#d8d84a" stroke-width="2"/>
</svg>
<span class="t" style="left:1474px;top:917px;color:#555c6a;font-size:14px">166.667 FPS</span>
<span class="t" style="left:1459px;top:880px;color:#c8d4e8;font-size:12px">0<span style="color:#8a93a4">K/s</span></span><span class="t" style="left:1459px;top:905px;color:#c8d4e8;font-size:12px">0<span style="color:#8a93a4">K/s</span></span>
<span class="t" style="left:1505px;top:891px;color:#d6dbe2;font-size:30px;transform-origin:0 50%;transform:translateY(-50%) scaleX(.9)">56</span><span class="t" style="left:1538px;top:897px;color:#d6dbe2;font-size:12px">%</span>
</div>
</body></html>
